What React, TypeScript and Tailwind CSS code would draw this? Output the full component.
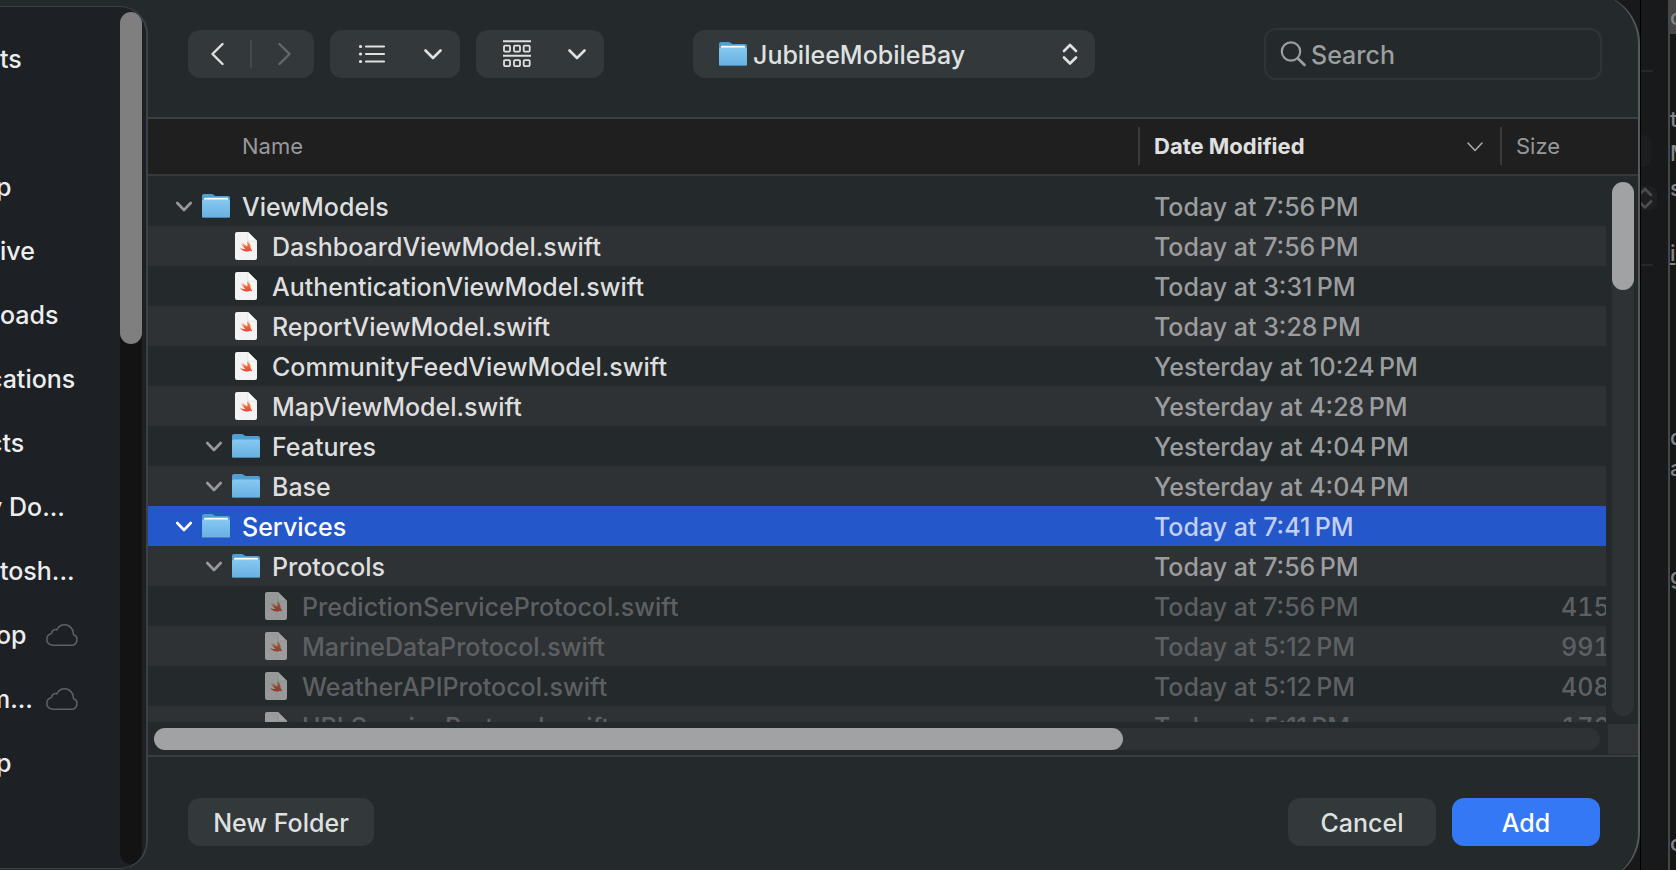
import React from "react";

type Kind = "folder" | "empty-folder" | "swift";

interface Row {
  name: string;
  kind: Kind;
  depth: 0 | 1 | 2;
  date: string;
  size?: string;
  selected?: boolean;
  dimmed?: boolean;
}

const rows: Row[] = [
  { name: "ViewModels", kind: "folder", depth: 0, date: "Today at 7:56\u202fPM" },
  { name: "DashboardViewModel.swift", kind: "swift", depth: 1, date: "Today at 7:56\u202fPM" },
  { name: "AuthenticationViewModel.swift", kind: "swift", depth: 1, date: "Today at 3:31\u202fPM" },
  { name: "ReportViewModel.swift", kind: "swift", depth: 1, date: "Today at 3:28\u202fPM" },
  { name: "CommunityFeedViewModel.swift", kind: "swift", depth: 1, date: "Yesterday at 10:24\u202fPM" },
  { name: "MapViewModel.swift", kind: "swift", depth: 1, date: "Yesterday at 4:28\u202fPM" },
  { name: "Features", kind: "empty-folder", depth: 1, date: "Yesterday at 4:04\u202fPM" },
  { name: "Base", kind: "empty-folder", depth: 1, date: "Yesterday at 4:04\u202fPM" },
  { name: "Services", kind: "folder", depth: 0, date: "Today at 7:41\u202fPM", selected: true },
  { name: "Protocols", kind: "folder", depth: 1, date: "Today at 7:56\u202fPM" },
  { name: "PredictionServiceProtocol.swift", kind: "swift", depth: 2, date: "Today at 7:56\u202fPM", size: "415", dimmed: true },
  { name: "MarineDataProtocol.swift", kind: "swift", depth: 2, date: "Today at 5:12\u202fPM", size: "991", dimmed: true },
  { name: "WeatherAPIProtocol.swift", kind: "swift", depth: 2, date: "Today at 5:12\u202fPM", size: "408", dimmed: true },
  { name: "URLSessionProtocol.swift", kind: "swift", depth: 2, date: "Today at 5:11\u202fPM", size: "176", dimmed: true },
];

// Labels are scrolled partly out of view; `cut` says how far the first glyph is hidden.
const sidebar: { label: string; cut?: "some" | "most"; cloud?: boolean }[] = [
  { label: "ts" },
  { label: "" },
  { label: "p", cut: "some" },
  { label: "ive" },
  { label: "oads" },
  { label: "cations", cut: "most" },
  { label: "cts", cut: "most" },
  { label: "y Do...", cut: "most" },
  { label: "tosh..." },
  { label: "op", cut: "some", cloud: true },
  { label: "m...", cut: "most", cloud: true },
  { label: "p", cut: "some" },
];

const cutClass = { some: "-ml-1", most: "-ml-3" };

function Folder({ empty = false }: { empty?: boolean }) {
  return (
    <svg viewBox="0 0 28 26" className="h-[26px] w-7 shrink-0" aria-hidden="true">
      <defs>
        <linearGradient id="folderFront" x1="0" y1="0" x2="0" y2="1">
          <stop offset="0" stopColor="#86c9f1" />
          <stop offset="1" stopColor="#68b0e0" />
        </linearGradient>
      </defs>
      <path d="M0 3a2 2 0 0 1 2-2h7.6c.8 0 1.3.2 1.9.7l.7.6c.5.4 1 .7 1.8.7h12a2 2 0 0 1 2 2v18a2 2 0 0 1-2 2H2a2 2 0 0 1-2-2z" fill="#4f9fd2" />
      {!empty && <path d="M2 8V5.800a1 1 0 0 1 1-1h22a1 1 0 0 1 1 1V8z" fill="#fff" />}
      <path d="M0 8.500a2 2 0 0 1 2-2h24a2 2 0 0 1 2 2V23a2 2 0 0 1-2 2H2a2 2 0 0 1-2-2z" fill="url(#folderFront)" />
      <path d="M1 24.500h26" stroke="#4a86ad" strokeWidth="1" />
    </svg>
  );
}

function SwiftFile() {
  return (
    <svg viewBox="0 0 22 28" className="h-7 w-[22px] shrink-0" aria-hidden="true">
      <defs>
        <linearGradient id="swiftBird" x1="0" y1="0" x2="0" y2="1">
          <stop offset="0" stopColor="#f6a24c" />
          <stop offset=".6" stopColor="#ee5a3c" />
          <stop offset="1" stopColor="#ea4335" />
        </linearGradient>
      </defs>
      <path d="M2 0h11l9 9v17a2 2 0 0 1-2 2H2a2 2 0 0 1-2-2V2a2 2 0 0 1 2-2z" fill="#f3f3f3" />
      <path d="M13 0l9 9h-7.500a1.500 1.500 0 0 1-1.500-1.500z" fill="#fff" />
      <path d="M13 0v7.500A1.500 1.500 0 0 0 14.500 9H22" fill="none" stroke="#d4d4d4" strokeWidth=".6" />
      <path
        d="M11.800 9c2.800 1.700 4.300 4.700 3.700 7.100 1.200 1.200 1.600 2.600 1.200 3.400-.8-1-1.700-.9-2.400-.5-3.100 1.500-7.200.2-9.300-3.200 1.900 1.200 3.900 1.600 5.400.9-2-1.500-3.600-3.600-4.600-5.400 1.500 1.400 3 2.500 4.100 3.200-1.200-1.400-2.100-2.700-2.700-3.900 1.600 1.500 3.200 2.900 5 4 .4-1.800.3-3.700-.4-5.600z"
        fill="url(#swiftBird)"
      />
    </svg>
  );
}

function Chevron() {
  return (
    <svg viewBox="0 0 18 12" className="h-3 w-[18px] shrink-0" fill="none" stroke="currentColor" strokeWidth="2.600" strokeLinecap="round" strokeLinejoin="round" aria-hidden="true">
      <path d="M1.500 2.500l7.500 7.500L16.500 2.500" />
    </svg>
  );
}

function Disclosure() {
  return (
    <svg viewBox="0 0 16 12" className="h-3 w-4" fill="none" stroke="currentColor" strokeWidth="2.600" strokeLinecap="round" strokeLinejoin="round" aria-hidden="true">
      <path d="M1.300 3l6.700 7 6.700-7" />
    </svg>
  );
}

function UpDown() {
  return (
    <svg viewBox="0 0 16 22" className="h-[22px] w-4 shrink-0" fill="none" stroke="currentColor" strokeWidth="2.600" strokeLinecap="round" strokeLinejoin="round" aria-hidden="true">
      <path d="M2 8l6-6 6 6M2 14.500l6 6 6-6" />
    </svg>
  );
}

function Cloud() {
  return (
    <svg viewBox="0 0 32 22" className="h-[22px] w-8 shrink-0 text-[#5c5f64]" fill="none" stroke="currentColor" strokeWidth="1.600" strokeLinejoin="round" aria-hidden="true">
      <path d="M7 21.200h18.500a5.600 5.600 0 0 0 1.900-10.800c.2-5.200-3.600-9.600-8.700-9.600-3.700 0-6.400 2-7.800 5C7.800 4.800 5.600 7 5.500 9.600 2.700 10.400.8 12.600.8 15.500c0 3.300 2.700 5.700 6.200 5.700z" />
    </svg>
  );
}

const folderIndent = { 0: "pl-7", 1: "pl-[58px]", 2: "pl-[88px]" };
const fileIndent = { 0: "pl-[57px]", 1: "pl-[87px]", 2: "pl-[117px]" };

function FileRow({ row, striped }: { row: Row; striped: boolean }) {
  const fill = row.selected ? "bg-[#2457c9]" : striped ? "bg-[#2f3235]" : "";
  const tone = row.selected ? "text-white" : row.dimmed ? "text-[#5d6063]" : "text-[#dedede]";
  const dateTone = row.selected ? "text-[#c2cff1]" : row.dimmed ? "text-[#5d6063]" : "text-[#9b9c9e]";
  return (
    <tr className="h-10" aria-selected={row.selected}>
      <td className={`p-0 ${fill} ${tone}`}>
        {row.kind === "swift" ? (
          <div className={`flex h-10 items-center ${fileIndent[row.depth]}`}>
            <span className={`flex w-[37px] shrink-0 ${row.dimmed ? "opacity-55" : ""}`}>
              <SwiftFile />
            </span>
            <span className="truncate pt-0.5">{row.name}</span>
          </div>
        ) : (
          <div className={`flex h-10 items-center ${folderIndent[row.depth]}`}>
            <button
              type="button"
              aria-label={`Collapse ${row.name}`}
              className={`flex w-[26px] shrink-0 ${row.selected ? "text-white" : "text-[#98999b]"}`}
            >
              <Disclosure />
            </button>
            <span className="flex w-10 shrink-0">
              <Folder empty={row.kind === "empty-folder"} />
            </span>
            <span className="truncate pt-0.5">{row.name}</span>
          </div>
        )}
      </td>
      <td className={`p-0 pt-0.5 pl-4 ${fill} ${dateTone}`}>{row.date}</td>
      <td className={`overflow-hidden p-0 pt-0.5 pl-[59px] whitespace-nowrap tabular-nums ${fill} ${dateTone}`}>{row.size}</td>
      <td className="p-0" />
    </tr>
  );
}

// Window edge behind the dialog: one line of code per entry, mostly covered.
const codeEdge = [
  { text: "c", box: "h-[34px] bg-[#464646]" },
  { text: "t", box: "mt-[68px] h-[34px]" },
  { text: "M", box: "h-[34px]" },
  { text: "s", box: "h-9" },
  { text: "i", box: "mt-[30px] h-[34px] underline" },
  { text: "d", box: "mt-[150px] h-[34px]" },
  { text: "a", box: "h-7" },
  { text: "g", box: "mt-[78px] h-8" },
  { text: "o", box: "mt-[234px] h-[34px]" },
];

function WindowBehind() {
  return (
    <div className="flex h-full w-9 shrink-0 overflow-hidden border-l border-black" aria-hidden="true">
      <div className="flex w-[27px] shrink-0 flex-col">
        <div className="mt-[70px] h-0.5 w-3 bg-[#27282a]" />
        <div className="mt-[63px] h-8 w-2.5 rounded-r-lg bg-[#1d1e1f]" />
        <div className="-ml-1 mt-[19px] flex h-6 w-5 items-center rounded-r-md bg-[#1e1f20] text-[#4c4d4f]">
          <UpDown />
        </div>
        <div className="mt-[54px] h-0.5 w-3 bg-[#27282a]" />
      </div>
      <div className="w-2 shrink-0 overflow-hidden border-l-2 border-[#454647] bg-[#151616] text-[22px] text-[#858585]">
        {codeEdge.map((line) => (
          <div key={line.text} className={`flex items-center ${line.box}`}>
            {line.text}
          </div>
        ))}
      </div>
    </div>
  );
}

const toolButton = "flex h-12 items-center rounded-xl bg-[#33383a] text-[#dfe0e0]";
const footerButton = "h-12 rounded-xl pt-0.5";
const headCell = "border-b-2 border-[#37393a] p-0 pb-0.5";

export default function App() {
  return (
    <div className="flex h-screen overflow-hidden bg-[#18191a] font-['Inter','Liberation_Sans',sans-serif] text-[25px] leading-8 font-medium">
      <main className="-mt-2 -mb-3.5 flex min-w-0 flex-1 overflow-hidden rounded-r-[52px] border-r-2 border-[#55595b] bg-[#24292b]">
        <aside className="mt-3.5 mb-[15px] flex w-[148px] shrink-0 overflow-hidden rounded-r-[28px] border-y border-r-2 border-[#3a4147] bg-[#1d2024]">
          <nav className="min-w-0 flex-1 overflow-hidden pt-5 text-[#ecedee]" aria-label="Locations">
            <ul>
              {sidebar.map((item, i) => (
                <li key={i} className="h-16 whitespace-nowrap">
                  {item.label && (
                    <a href="#" className="flex h-16 items-center">
                      <span className={item.cloud ? "w-[46px]" : ""}>
                        <span className={`block ${item.cut ? cutClass[item.cut] : ""}`}>{item.label}</span>
                      </span>
                      {item.cloud && <Cloud />}
                    </a>
                  )}
                </li>
              ))}
            </ul>
          </nav>
          <div className="mt-[5px] mr-1 mb-1 w-[22px] rounded-full bg-[#131313]">
            <div className="h-[332px] rounded-full bg-[#7f7f7f]" />
          </div>
        </aside>

        <section className="flex min-w-0 flex-1 flex-col pt-2">
          <header className="flex h-[117px] shrink-0 items-start pt-[30px] pr-9 pl-10">
            <div className={`${toolButton} w-[126px]`}>
              <button type="button" aria-label="Back" className="flex flex-1 justify-center pr-1">
                <svg viewBox="0 0 14 24" className="h-6 w-3.5" fill="none" stroke="currentColor" strokeWidth="2.400" strokeLinecap="round" strokeLinejoin="round">
                  <path d="M12.500 2L2.500 12l10 10" />
                </svg>
              </button>
              <span className="h-7 w-0.5 bg-[#44494b]" />
              <button type="button" aria-label="Forward" className="flex flex-1 justify-center pl-1 text-[#63676a]">
                <svg viewBox="0 0 14 24" className="h-6 w-3.5" fill="none" stroke="currentColor" strokeWidth="2.400" strokeLinecap="round" strokeLinejoin="round">
                  <path d="M1.500 2l10 10-10 10" />
                </svg>
              </button>
            </div>
            <button type="button" aria-label="List view" className={`${toolButton} ml-4 w-[130px] justify-between pr-[18px] pl-7`}>
              <svg viewBox="0 0 28 20" className="h-5 w-7" fill="none" stroke="currentColor" strokeWidth="2.200" strokeLinecap="round">
                <path d="M8 2.500h18M8 10h18M8 17.500h18" />
                <path d="M2.500 2.500h.1M2.500 10h.1M2.500 17.500h.1" strokeWidth="3.200" />
              </svg>
              <Chevron />
            </button>
            <button type="button" aria-label="Group items" className={`${toolButton} ml-4 w-32 justify-between pr-[18px] pl-[27px]`}>
              <svg viewBox="0 0 28 28" className="h-7 w-7" fill="none" stroke="currentColor" strokeWidth="1.800">
                <path d="M0 1.200h28M0 15.700h28" strokeWidth="2" />
                <rect x="1" y="5.600" width="6" height="6" rx="1" />
                <rect x="11" y="5.600" width="6" height="6" rx="1" />
                <rect x="20.700" y="5.600" width="6" height="6" rx="1" />
                <rect x="1" y="20.100" width="6" height="6" rx="1" />
                <rect x="11" y="20.100" width="6" height="6" rx="1" />
                <rect x="20.700" y="20.100" width="6" height="6" rx="1" />
              </svg>
              <Chevron />
            </button>
            <button type="button" className={`${toolButton} ml-[89px] w-[402px] pr-[17px] pl-[26px]`}>
              <Folder />
              <span className="ml-1.5 flex-1 pt-0.5 text-left">JubileeMobileBay</span>
              <UpDown />
            </button>
            <label className="-mt-0.5 ml-auto flex h-[52px] w-[338px] items-center rounded-xl border-2 border-[#2f3437] px-3.5 text-[#9c9e9f]">
              <svg viewBox="0 0 26 26" className="h-[26px] w-[26px] shrink-0" fill="none" stroke="currentColor" strokeWidth="2.200" strokeLinecap="round" aria-hidden="true">
                <circle cx="11" cy="10.500" r="9.200" />
                <path d="M18 17.500l6.500 6.500" strokeWidth="2.600" />
              </svg>
              <input
                type="text"
                aria-label="Search"
                placeholder="Search"
                className="ml-[5px] min-w-0 flex-1 bg-transparent pt-0.5 outline-none placeholder:text-[#9c9e9f]"
              />
            </label>
          </header>

          <div className="relative min-h-0 flex-1 overflow-hidden border-t-2 border-[#3a4146]">
            <table className="w-full table-fixed border-separate border-spacing-0 text-left">
              <colgroup>
                <col />
                <col className="w-[364px]" />
                <col className="w-[104px]" />
                <col className="w-8" />
              </colgroup>
              <thead className="bg-[#1f1f1f] text-[22px]">
                <tr className="h-[57px]">
                  <th scope="col" className={`${headCell} pl-[94px] font-normal text-[#98999a]`}>Name</th>
                  <th scope="col" className={`${headCell} font-bold text-[#e0e0e0]`} aria-sort="descending">
                    <div className="flex h-[38px] items-center border-x-2 border-[#3a3a3a] pr-[17px] pl-3.5">
                      <span className="flex-1">Date Modified</span>
                      <svg viewBox="0 0 16 10" className="mt-0.5 h-2.5 w-4 text-[#a8a8a8]" fill="none" stroke="currentColor" strokeWidth="1.600" strokeLinecap="round" strokeLinejoin="round" aria-hidden="true">
                        <path d="M1 1l7 7.500L15 1" />
                      </svg>
                    </div>
                  </th>
                  <th scope="col" className={`${headCell} pl-3.5 font-normal text-[#98999a]`}>Size</th>
                  <th className={headCell} />
                </tr>
              </thead>
              <tbody>
                <tr className="h-2.5" aria-hidden="true">
                  <td colSpan={4} className="p-0" />
                </tr>
                {rows.map((row, i) => (
                  <FileRow key={row.name} row={row} striped={i % 2 === 1} />
                ))}
              </tbody>
            </table>
            <div className="absolute top-[63px] right-1 bottom-1.5 w-[22px] rounded-full bg-[#2f3235]">
              <div className="h-[108px] rounded-full bg-[#a1a2a4]" />
            </div>
          </div>

          <div className="flex h-[35px] shrink-0 border-b-2 border-[#393e40] pl-1.5">
            <div className="mt-1.5 h-[22px] flex-1 rounded-full bg-[#2f3235]">
              <div className="h-[22px] w-[67%] rounded-full bg-[#a1a2a4]" />
            </div>
            <div className="mt-0.5 ml-2 h-[30px] w-[30px] bg-[#303437]" />
          </div>

          <footer className="flex h-[127px] shrink-0 items-start gap-4 pt-[41px] pr-[38px] pl-10">
            <button type="button" className={`${footerButton} mr-auto w-[186px] bg-[#33383a] text-[#dfe0e0]`}>New Folder</button>
            <button type="button" className={`${footerButton} w-[148px] bg-[#33383a] text-[#dfe0e0]`}>Cancel</button>
            <button type="button" className={`${footerButton} w-[148px] bg-[#3478f6] text-white`}>Add</button>
          </footer>
        </section>
      </main>
      <WindowBehind />
    </div>
  );
}
